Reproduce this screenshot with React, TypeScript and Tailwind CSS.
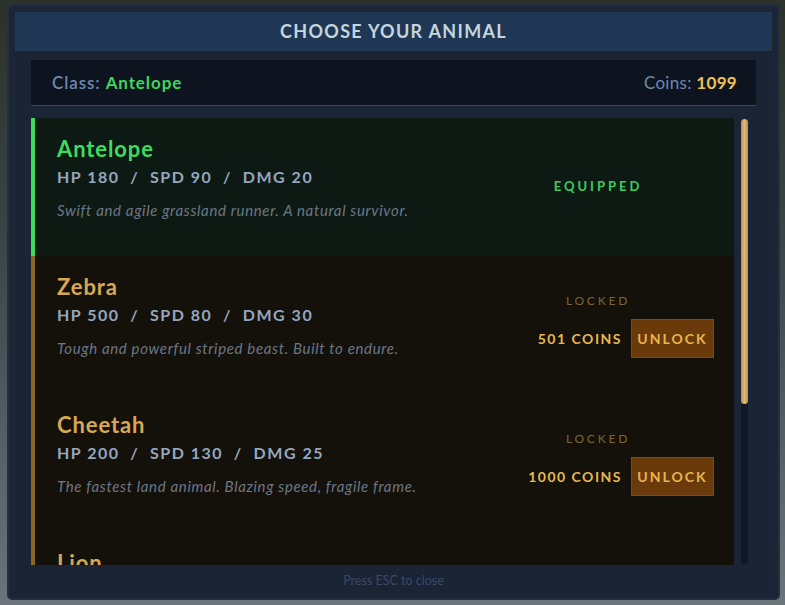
import React from 'react';

type Animal = {
  name: string;
  hp: number;
  spd: number;
  dmg: number;
  desc: string;
  cost?: number;
  equipped?: boolean;
};

const animals: Animal[] = [
  { name: 'Antelope', hp: 180, spd: 90, dmg: 20, desc: 'Swift and agile grassland runner. A natural survivor.', equipped: true },
  { name: 'Zebra', hp: 500, spd: 80, dmg: 30, desc: 'Tough and powerful striped beast. Built to endure.', cost: 501 },
  { name: 'Cheetah', hp: 200, spd: 130, dmg: 25, desc: 'The fastest land animal. Blazing speed, fragile frame.', cost: 1000 },
  { name: 'Lion', hp: 400, spd: 100, dmg: 45, desc: 'King of the savanna. Raw strength and courage.', cost: 1500 },
];

const font = { fontFamily: 'Lato, "Open Sans", sans-serif' };

function AnimalCard({ a }: { a: Animal }) {
  const eq = a.equipped;
  return (
    <div
      className={`flex h-[138px] shrink-0 border-l-4 ${
        eq ? 'border-[#3ddc5f] bg-[#0d1a14]' : 'border-[#8d6622] bg-[#14110b]'
      }`}
    >
      <div className="flex-1 pl-[22px] pt-[17px]">
        <div className={`text-[22px] font-bold leading-[28px] tracking-[0.9px] ${eq ? 'text-[#3ddc5f]' : 'text-[#d6a952]'}`}>
          {a.name}
        </div>
        <div className="mt-[4px] whitespace-pre text-[16px] font-bold leading-[20px] tracking-[1.5px] text-[#94a7c0]">
          {`HP ${a.hp}  /  SPD ${a.spd}  /  DMG ${a.dmg}`}
        </div>
        <div className="mt-[13px] text-[15px] italic leading-[20px] tracking-[0.65px] text-[#6b7786]">{a.desc}</div>
      </div>
      <div className="flex flex-col items-end justify-center pr-[20px]">
        {eq ? (
          <div className="mr-[51px] w-[130px] text-center text-[13px] font-bold tracking-[3px] text-[#3dcc5c]">EQUIPPED</div>
        ) : (
          <>
            <div className="mr-[51px] w-[130px] text-center text-[12px] tracking-[2.8px] text-[#7d6530]">LOCKED</div>
            <div className="mt-[9px] flex items-center gap-[9px]">
              <span className="text-[14px] font-bold tracking-[1.5px] text-[#e8b850]">{a.cost} COINS</span>
              <button className="h-[39px] w-[83px] border border-[#7d4a16] bg-[#6a3a0b] text-[14px] font-bold tracking-[2px] text-[#e8b44e]">
                UNLOCK
              </button>
            </div>
          </>
        )}
      </div>
    </div>
  );
}

export default function App() {
  return (
    <div
      className="h-[605px] w-[785px] overflow-hidden bg-[linear-gradient(180deg,#2c3228_0%,#3a4548_40%,#6a747a_100%)] pl-[7px] pt-[4px]"
      style={font}
    >
      <div className="h-[596px] w-[773px] rounded-[5px] border-2 border-[#252f42] bg-[#1b2536] px-[6px] pt-[6px] pb-[4px]">
        <div className="flex h-full flex-col bg-[#1a2435]">
          <div className="flex h-[39px] shrink-0 items-center justify-center bg-[#1f3655] text-[18px] font-bold tracking-[1.3px] text-[#c4d6dc]">
            CHOOSE YOUR ANIMAL
          </div>
          <div className="flex min-h-0 flex-1 flex-col px-[16px] pt-[9px]">
            <div className="flex h-[46px] shrink-0 items-center justify-between border-b border-[#4e4526] bg-[#0e1320] pl-[21px] pr-[19px] text-[17px]">
              <div className="tracking-[0.9px] text-[#6a8ab0]">
                <span className="font-semibold">Class: </span>
                <span className="font-bold text-[#3dd65c]">Antelope</span>
              </div>
              <div className="tracking-[0.3px] text-[#6a8ab0]">
                Coins: <span className="font-bold text-[#f0c050]">1099</span>
              </div>
            </div>
            <div className="mt-[12px] flex min-h-0 flex-1 gap-[7px]">
              <div className="flex w-[703px] flex-col overflow-hidden">
                {animals.map((a) => (
                  <AnimalCard key={a.name} a={a} />
                ))}
              </div>
              <div className="mt-[1px] flex w-[7px] flex-col rounded-full bg-[#101826]">
                <div className="h-[285px] rounded-full bg-[linear-gradient(90deg,#b8924e,#e0b774,#b8924e)]" />
              </div>
            </div>
          </div>
          <div className="flex h-[29px] shrink-0 items-center justify-center pt-[3px] text-[12.5px] text-[#3b4866]">
            Press ESC to close
          </div>
        </div>
      </div>
    </div>
  );
}
